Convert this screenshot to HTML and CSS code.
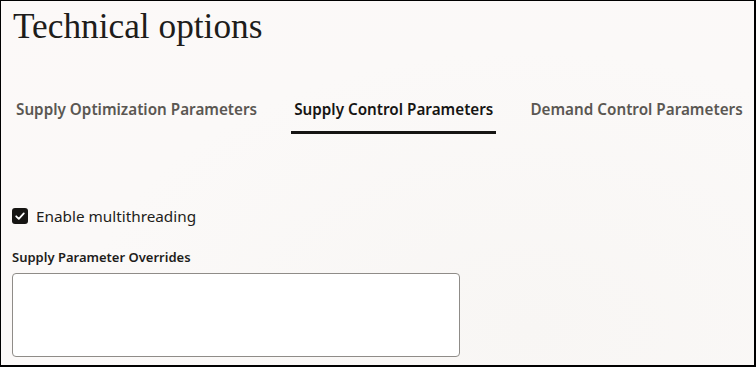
FILE: index.html
```html
<!DOCTYPE html>
<html lang="en">
<head>
<meta charset="utf-8">
<title>Technical options</title>
<link rel="stylesheet" href="styles.css">
</head>
<body>
<div class="frame">
  <h1 class="title">Technical options</h1>
  <nav class="tabs">
    <div class="tab">Supply Optimization Parameters</div>
    <div class="tab tab-selected">Supply Control Parameters</div>
    <div class="tab">Demand Control Parameters</div>
  </nav>
  <div class="form">
    <label class="check">
      <span class="box">
        <svg width="16" height="16" viewBox="0 0 16 16"><path d="M4.2 8.3 L6.8 10.8 L11.8 5.4" fill="none" stroke="#fff" stroke-width="1.8" stroke-linecap="round" stroke-linejoin="round"/></svg>
      </span>
      <span class="check-label">Enable multithreading</span>
    </label>
    <div class="field-label">Supply Parameter Overrides</div>
    <div class="textarea"></div>
  </div>
</div>
</body>
</html>
```
FILE: styles.css
```css
html, body {
  margin: 0;
  padding: 0;
}
body {
  width: 756px;
  height: 367px;
  overflow: hidden;
  font-family: "Noto Sans", "Open Sans", sans-serif;
  color: #161513;
}
.frame {
  box-sizing: border-box;
  width: 756px;
  height: 367px;
  border-top: 1px solid #000;
  border-left: 1px solid #000;
  border-right: 2px solid #000;
  border-bottom: 2px solid #000;
  background: radial-gradient(ellipse at 70% 90%, #f8f6f4 0%, #fbf9f8 60%, #fcf9f8 100%);
  padding: 0 0 0 11px;
  display: flex;
  flex-direction: column;
}
.title {
  margin: 8px 0 0 1px;
  font-family: "Liberation Serif", "Times New Roman", serif;
  font-weight: 400;
  font-size: 35.3px;
  line-height: 36px;
  color: #1e1d1b;
}
.tabs {
  display: flex;
  gap: 31px;
  margin-top: 52px;
  margin-left: 1px;
}
.tab {
  font-size: 15.25px;
  font-weight: 600;
  color: #5a5752;
  padding: 0 3px;
  height: 37px;
  line-height: 24px;
  box-sizing: border-box;
  white-space: nowrap;
}
.tab-selected {
  color: #161513;
  border-bottom: 3px solid #161513;
  border-radius: 2px 2px 0 0;
}
.form {
  margin-top: 73px;
  display: flex;
  flex-direction: column;
}
.check {
  display: flex;
  align-items: center;
  gap: 8px;
  height: 18px;
}
.box {
  width: 16px;
  height: 16px;
  background: #161513;
  border-radius: 3px;
  display: flex;
}
.check-label {
  font-size: 15.3px;
  color: #1e1d1b;
}
.field-label {
  margin-top: 23px;
  font-size: 13px;
  font-weight: 600;
  color: #1e1d1b;
  line-height: 18px;
}
.textarea {
  margin-top: 7px;
  width: 448px;
  height: 84px;
  box-sizing: border-box;
  border: 1px solid #8f8c88;
  border-radius: 4px;
  background: #fff;
}
```
